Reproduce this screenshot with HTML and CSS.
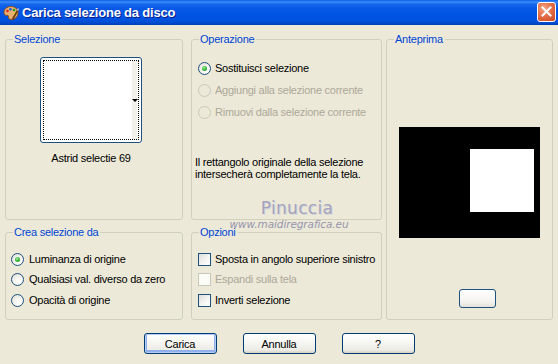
FILE: index.html
```html
<!DOCTYPE html>
<html lang="it">
<head>
<meta charset="utf-8">
<title>Carica selezione da disco</title>
<link rel="stylesheet" href="styles.css">
</head>
<body>
<div class="window">
  <div class="titlebar">
    <svg class="app-icon" width="16" height="16" viewBox="0 0 16 16">
      <path d="M8 1.5c-3.9 0-7 2.6-7 5.8 0 2.4 1.6 3.3 3 3.1 1.2-.2 1.7.6 1.5 1.6-.3 1.6.9 2.5 2.7 2.5 3.8 0 6.8-3 6.8-6.8S11.9 1.5 8 1.5z" fill="#E8B070" stroke="#8A4F1E" stroke-width="1"/>
      <circle cx="4.5" cy="6" r="1.3" fill="#E02020"/>
      <circle cx="7.5" cy="4.2" r="1.3" fill="#2060E0"/>
      <circle cx="11" cy="5" r="1.3" fill="#20A020"/>
      <circle cx="12" cy="8.8" r="1.3" fill="#F0E020"/>
      <path d="M9.5 14.5l5-9" stroke="#6A3A10" stroke-width="1.6"/>
      <path d="M14.5 5.5l1-2" stroke="#C0C0C0" stroke-width="1.6"/>
    </svg>
    <span class="title">Carica selezione da disco</span>
    <div class="close">
      <svg width="11" height="11" viewBox="0 0 11 11"><path d="M1.5 1.5l8 8M9.5 1.5l-8 8" stroke="#fff" stroke-width="2" stroke-linecap="square"/></svg>
    </div>
  </div>

  <div class="content">
    <div class="groups">
      <fieldset class="group group-sel">
        <legend>Selezione</legend>
        <div class="thumb">
          <div class="thumb-focus"></div>
          <div class="thumb-strip"></div>
          <span class="thumb-arrow"></span>
        </div>
        <div class="thumb-label">Astrid selectie 69</div>
      </fieldset>

      <fieldset class="group group-op">
        <legend>Operazione</legend>
        <div class="options op-options">
          <div class="opt"><span class="radio checked"></span><span>Sostituisci selezione</span></div>
          <div class="opt disabled"><span class="radio"></span><span>Aggiungi alla selezione corrente</span></div>
          <div class="opt disabled"><span class="radio"></span><span>Rimuovi dalla selezione corrente</span></div>
        </div>
        <p class="note">Il rettangolo originale della selezione<br>intersecherà completamente la tela.</p>
      </fieldset>

      <fieldset class="group group-prev">
        <legend>Anteprima</legend>
        <div class="preview"><div class="preview-sel"></div></div>
        <div class="mini-btn"></div>
      </fieldset>

      <fieldset class="group group-crea">
        <legend>Crea selezione da</legend>
        <div class="options crea-options">
          <div class="opt"><span class="radio checked"></span><span>Luminanza di origine</span></div>
          <div class="opt"><span class="radio"></span><span>Qualsiasi val. diverso da zero</span></div>
          <div class="opt"><span class="radio"></span><span>Opacità di origine</span></div>
        </div>
      </fieldset>

      <fieldset class="group group-opz">
        <legend>Opzioni</legend>
        <div class="options opz-options">
          <div class="opt"><span class="check"></span><span>Sposta in angolo superiore sinistro</span></div>
          <div class="opt disabled"><span class="check"></span><span>Espandi sulla tela</span></div>
          <div class="opt"><span class="check"></span><span>Inverti selezione</span></div>
        </div>
      </fieldset>
    </div>

    <div class="buttons">
      <button class="btn default">Carica</button>
      <button class="btn">Annulla</button>
      <button class="btn">?</button>
    </div>
  </div>

  <div class="watermark">
    <div class="wm-name">Pinuccia</div>
    <div class="wm-site">www.maidiregrafica.eu</div>
  </div>
</div>
</body>
</html>
```

FILE: styles.css
```css
html, body {
  margin: 0;
  padding: 0;
}
body {
  background: #ECE9D8;
  font-family: "Liberation Sans", Arial, sans-serif;
  font-size: 11px;
  letter-spacing: -0.25px;
  color: #000;
}
.window {
  position: relative;
  width: 558px;
  height: 364px;
  overflow: hidden;
  background: #ECE9D8;
}

/* Title bar */
.titlebar {
  height: 25px;
  display: flex;
  align-items: center;
  background: linear-gradient(to bottom, #0A5FE8 0%, #3D8EF8 8%, #1767EC 16%, #0758E5 35%, #0054E3 60%, #0050DA 85%, #003FBC 100%);
  box-sizing: border-box;
  padding-left: 3px;
}
.app-icon {
  flex: none;
  margin-top: 1px;
}
.title {
  margin-left: 3px;
  color: #fff;
  font-family: "Liberation Sans", Arial, sans-serif;
  font-weight: bold;
  font-size: 13px;
  letter-spacing: -0.2px;
  text-shadow: 1px 1px 0 #0A1E8C;
  flex: 1;
}
.close {
  width: 19px;
  height: 20px;
  margin-right: 2px;
  margin-bottom: 2px;
  box-sizing: border-box;
  border: 1px solid #fff;
  border-radius: 3px;
  background: radial-gradient(circle at 35% 30%, #F4A584 0%, #E5704A 45%, #C94620 100%);
  display: flex;
  align-items: center;
  justify-content: center;
}

/* Content */
.content {
  padding-top: 8px;
}
.groups {
  display: grid;
  grid-template-columns: 182px 191px 167px;
  grid-template-rows: 187px 94px;
  column-gap: 4px;
  row-gap: 6px;
  padding-left: 5px;
}
.group {
  margin: 0;
  padding: 0;
  min-width: 0;
  border: 1px solid #D0D0BF;
  border-radius: 3px;
  box-sizing: border-box;
}
.group legend {
  color: #0046D5;
  padding: 0 2px 0 1px;
  margin-left: 7px;
  line-height: 13px;
}
.group-sel {
  grid-column: 1;
  grid-row: 1;
  width: 178px;
  display: flex;
  flex-direction: column;
  align-items: center;
  padding-right: 6px;
}
.group-op {
  grid-column: 2;
  grid-row: 1;
}
.group-prev {
  grid-column: 3;
  grid-row: 1 / 3;
}
.group-crea {
  grid-column: 1;
  grid-row: 2;
  width: 178px;
}
.group-opz {
  grid-column: 2;
  grid-row: 2;
}

/* Selection thumbnail */
.thumb {
  position: relative;
  width: 102px;
  height: 86px;
  margin-top: 11px;
  box-sizing: border-box;
  border: 1px solid #1C5180;
  border-radius: 3px;
  background: #fff;
}
.thumb-focus {
  position: absolute;
  left: 2px;
  top: 2px;
  right: 2px;
  bottom: 2px;
  border: 1px dotted #000;
}
.thumb-strip {
  position: absolute;
  top: 3px;
  bottom: 3px;
  right: 4px;
  width: 5px;
  background: #F2F1EC;
}
.thumb-arrow {
  position: absolute;
  right: 3px;
  top: 41px;
  width: 0;
  height: 0;
  border-left: 3px solid transparent;
  border-right: 3px solid transparent;
  border-top: 3px solid #000;
}
.thumb-label {
  margin-top: 9px;
  line-height: 13px;
}

/* Options */
.options {
  display: flex;
  flex-direction: column;
}
.opt {
  display: flex;
  align-items: center;
  gap: 4px;
  line-height: 13px;
  white-space: nowrap;
}
.opt.disabled {
  color: #ACA899;
}
.op-options {
  margin-top: 12px;
  padding-left: 6px;
}
.op-options .opt {
  height: 21.7px;
}
.crea-options {
  margin-top: 10px;
  padding-left: 5px;
}
.crea-options .opt {
  height: 20.5px;
  gap: 5px;
}
.opz-options {
  margin-top: 10px;
  padding-left: 6px;
}
.opz-options .opt {
  height: 20.5px;
}

.radio {
  flex: none;
  width: 13px;
  height: 13px;
  box-sizing: border-box;
  border: 1px solid #1C5180;
  border-radius: 50%;
  background: radial-gradient(circle at 65% 70%, #FFFFFF 0%, #F4F3EE 45%, #DCDAD0 100%);
  position: relative;
}
.radio.checked::after {
  content: "";
  position: absolute;
  left: 3px;
  top: 3px;
  width: 5px;
  height: 5px;
  border-radius: 50%;
  background: radial-gradient(circle at 40% 35%, #A8F0A8 0%, #3DBA3D 45%, #1E8A1E 100%);
}
.disabled .radio {
  border-color: #CAC8BB;
  background: #ECE9D8;
}
.check {
  flex: none;
  width: 13px;
  height: 13px;
  box-sizing: border-box;
  border: 1px solid #1C5180;
  background: linear-gradient(135deg, #DCDCD7 0%, #F4F4F1 55%, #FFFFFF 100%);
}
.disabled .check {
  border-color: #CAC8BB;
  background: #FBFBF8;
}

.note {
  margin: 33px 0 0 3px;
  line-height: 12px;
  white-space: nowrap;
}

/* Preview */
.preview {
  position: relative;
  width: 141px;
  height: 111px;
  margin: 81px 0 0 12px;
  background: #000;
}
.preview-sel {
  position: absolute;
  left: 71px;
  top: 22px;
  width: 64px;
  height: 63px;
  background: #fff;
}
.mini-btn {
  width: 37px;
  height: 19px;
  margin: 51px 0 0 72px;
  box-sizing: border-box;
  border: 1px solid #1C5180;
  border-radius: 3px;
  background: linear-gradient(to bottom, #FFFFFF 0%, #F3F2ED 70%, #E3E1D8 100%);
}

/* Buttons */
.buttons {
  display: flex;
  justify-content: center;
  gap: 26px;
  margin-top: 13px;
}
.btn {
  width: 73px;
  height: 21px;
  padding: 0;
  margin: 0;
  box-sizing: border-box;
  border: 1px solid #003C74;
  border-radius: 3px;
  background: linear-gradient(to bottom, #FFFFFF 0%, #F7F7F4 40%, #ECEBE5 85%, #D6D0C5 100%);
  font-family: "Liberation Sans", Arial, sans-serif;
  font-size: 11px;
  letter-spacing: -0.25px;
  color: #000;
}
.btn.default {
  box-shadow: inset 0 0 0 1px #B3CDF5, inset 0 -1px 0 2px #8FB0EC;
}

/* Watermark overlay */
.watermark {
  position: absolute;
  left: 226px;
  top: 198px;
  width: 126px;
  text-align: center;
  pointer-events: none;
  letter-spacing: 0;
}
.wm-name {
  margin-left: 16px;
  font-family: "DejaVu Sans", sans-serif;
  font-size: 17px;
  line-height: 21px;
  letter-spacing: 0.3px;
  color: #A4A4BC;
  text-shadow: 1px 1px 0 #D4D4DE;
}
.wm-site {
  font-family: "DejaVu Sans", sans-serif;
  font-style: italic;
  font-size: 10.5px;
  line-height: 11px;
  color: #9696AE;
  letter-spacing: -0.1px;
}
```
